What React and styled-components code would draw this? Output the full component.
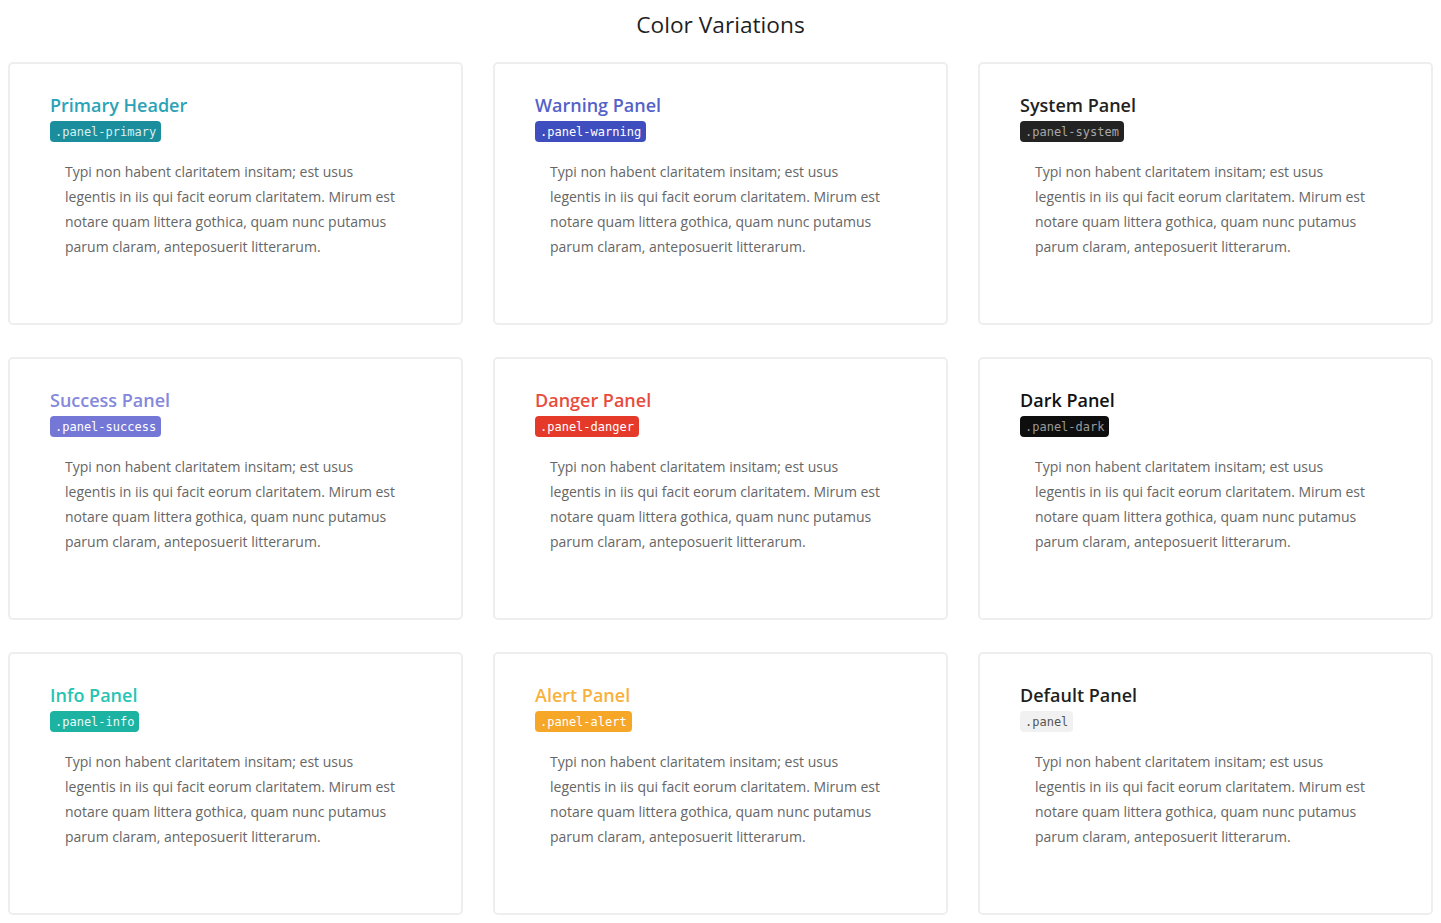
import React from "react";
import styled, { createGlobalStyle } from "styled-components";

const GlobalStyle = createGlobalStyle`
  body {
    margin: 8px;
    background: #fff;
    font-family: "Open Sans", "Noto Sans", sans-serif;
  }
`;

const Page = styled.div`
  width: 100%;
`;

const PageTitle = styled.h1`
  margin: 0 0 21px;
  text-align: center;
  font-size: 22.7px;
  line-height: 33px;
  font-weight: 400;
  color: #1f1f1f;
`;

const Grid = styled.div`
  display: grid;
  grid-template-columns: repeat(3, 1fr);
  column-gap: 30px;
  row-gap: 32px;
`;

const Card = styled.div`
  box-sizing: border-box;
  height: 263px;
  padding: 30px 40px;
  border: 2px solid #eeeeee;
  border-radius: 5px;
  background: #fff;
`;

const Heading = styled.h3`
  margin: 0;
  font-size: 18px;
  line-height: 22px;
  font-weight: 600;
  color: ${(p) => p.$color};
`;

const Tag = styled.code`
  display: inline-block;
  margin-top: 5px;
  padding: 4px 5px 2px;
  border-radius: 4px;
  font-family: "DejaVu Sans Mono", "Liberation Mono", monospace;
  font-size: 12px;
  line-height: 15px;
  background: ${(p) => p.$bg};
  color: ${(p) => p.$fg};
`;

const Text = styled.p`
  margin: 17px 0 0;
  padding: 0 15px;
  font-size: 14px;
  line-height: 25px;
  color: #666666;
`;

const panels = [
  { title: "Primary Header", cls: ".panel-primary", color: "#2ba3b7", bg: "#1a8e9c", fg: "#d8eef0" },
  { title: "Warning Panel", cls: ".panel-warning", color: "#5462c9", bg: "#3f4ebf", fg: "#ffffff" },
  { title: "System Panel", cls: ".panel-system", color: "#222222", bg: "#232323", fg: "#a8a8a8" },
  { title: "Success Panel", cls: ".panel-success", color: "#8588dc", bg: "#7477d6", fg: "#ffffff" },
  { title: "Danger Panel", cls: ".panel-danger", color: "#e84c3d", bg: "#e53a2a", fg: "#ffffff" },
  { title: "Dark Panel", cls: ".panel-dark", color: "#111111", bg: "#0e0e0e", fg: "#9a9a9a" },
  { title: "Info Panel", cls: ".panel-info", color: "#27c4b3", bg: "#1db3a2", fg: "#eafaf7" },
  { title: "Alert Panel", cls: ".panel-alert", color: "#f8b13c", bg: "#f6a728", fg: "#ffffff" },
  { title: "Default Panel", cls: ".panel", color: "#1f1f1f", bg: "#f1f1f1", fg: "#555555" },
];

const body =
  "Typi non habent claritatem insitam; est usus legentis in iis qui facit eorum claritatem. Mirum est notare quam littera gothica, quam nunc putamus parum claram, anteposuerit litterarum.";

export default function App() {
  return (
    <Page>
      <GlobalStyle />
      <PageTitle>Color Variations</PageTitle>
      <Grid>
        {panels.map((p) => (
          <Card key={p.cls}>
            <Heading $color={p.color}>{p.title}</Heading>
            <Tag $bg={p.bg} $fg={p.fg}>
              {p.cls}
            </Tag>
            <Text>{body}</Text>
          </Card>
        ))}
      </Grid>
    </Page>
  );
}
